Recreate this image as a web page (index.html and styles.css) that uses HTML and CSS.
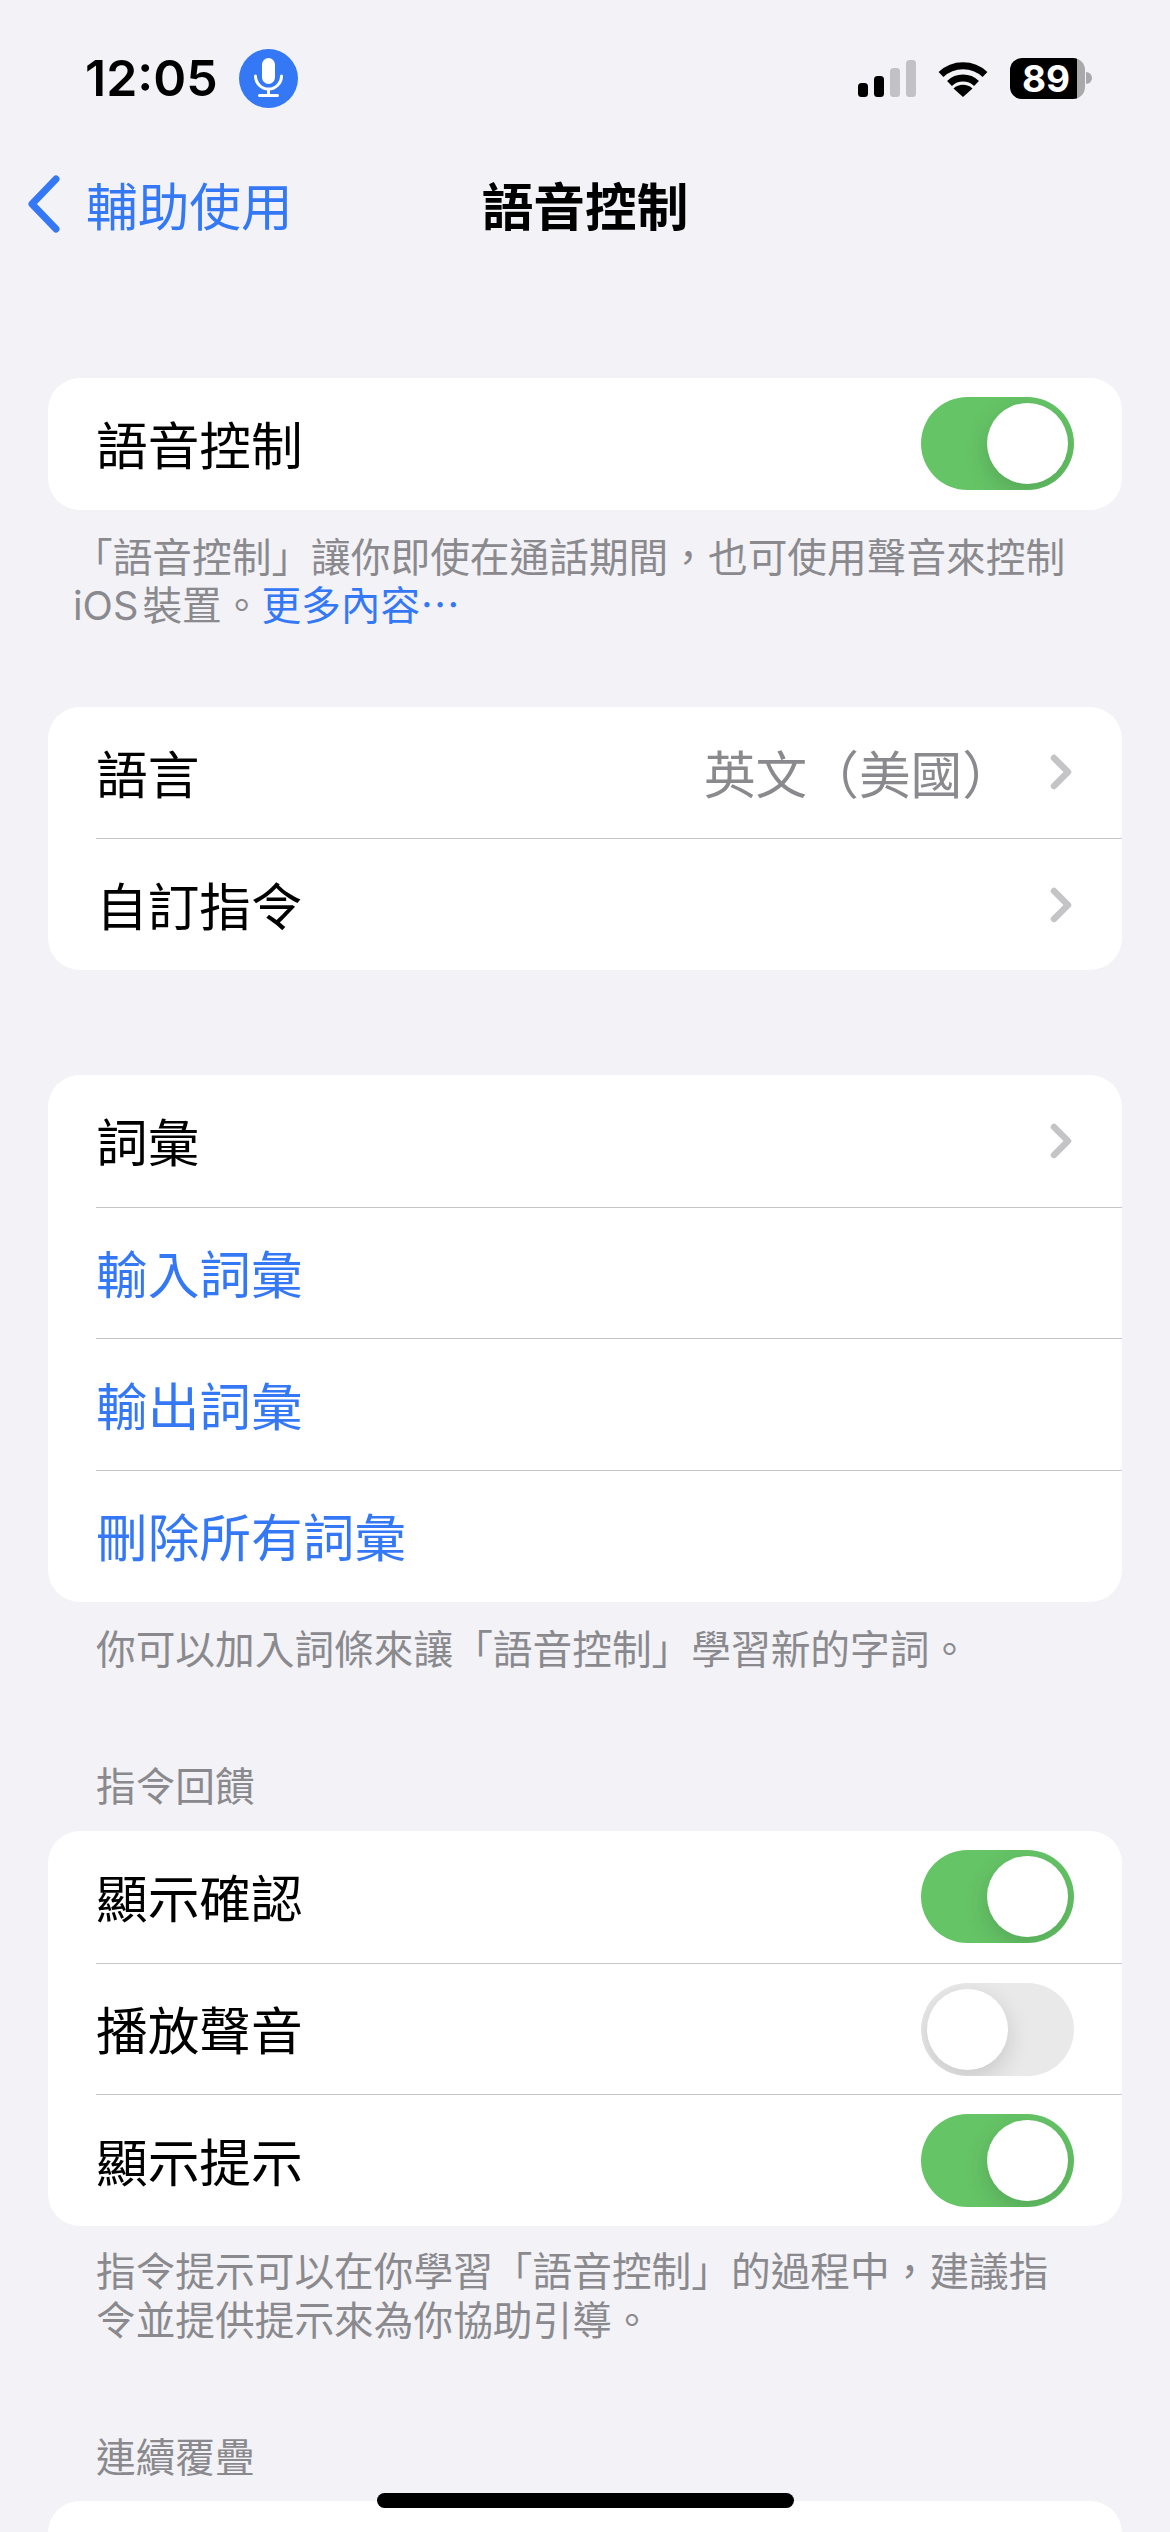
FILE: index.html
```html
<!DOCTYPE html>
<html lang="zh-Hant">
<head>
<meta charset="utf-8">
<title>語音控制</title>
<link rel="stylesheet" href="styles.css">
</head>
<body>
<div class="screen">
  <header class="status">
    <div class="status-left">
      <span class="time">12:05</span>
      <svg class="mic" viewBox="0 0 59 59" width="59" height="59">
        <circle cx="29.5" cy="29.5" r="29.5" fill="#3478f6"/>
        <rect x="23" y="9" width="13" height="26" rx="6.5" fill="#fff"/>
        <path d="M16.5 27a13 13 0 0 0 26 0M29.5 40v6M20.5 46.5h18" fill="none" stroke="#fff" stroke-width="3" stroke-linecap="round"/>
      </svg>
    </div>
    <div class="status-right">
      <svg class="signal" viewBox="0 0 58 37" width="58" height="37">
        <rect x="0" y="23" width="10" height="14" rx="3.5" fill="#000"/>
        <rect x="16" y="16" width="10" height="21" rx="3.5" fill="#000"/>
        <rect x="32" y="8" width="10" height="29" rx="3.5" fill="#c2c2c6"/>
        <rect x="48" y="0" width="10" height="37" rx="3.5" fill="#c2c2c6"/>
      </svg>
      <svg class="wifi" viewBox="0 0 50 37" width="50" height="37">
        <path d="M3 14.5a32 32 0 0 1 44 0" fill="none" stroke="#000" stroke-width="7"/>
        <path d="M11.5 23.5a19.5 19.5 0 0 1 27 0" fill="none" stroke="#000" stroke-width="7"/>
        <path d="M25 37L15.5 28.5a14 14 0 0 1 19 0z" fill="#000"/>
      </svg>
      <div class="battery">
        <div class="battery-body"><span class="battery-num">89</span></div>
        <div class="battery-nub"></div>
      </div>
    </div>
  </header>

  <nav class="nav">
    <a class="back">
      <svg viewBox="0 0 34 60" width="34" height="60">
        <path d="M29 5L5 30l24 25" fill="none" stroke="#3478f6" stroke-width="7" stroke-linecap="round" stroke-linejoin="round"/>
      </svg>
      <span>輔助使用</span>
    </a>
    <h1 class="title">語音控制</h1>
    <span></span>
  </nav>

  <main class="content">
    <section class="card card-1">
      <div class="row"><div class="row-inner"><span class="label">語音控制</span><span class="toggle on"><i></i></span></div></div>
    </section>
    <p class="note note-wide">「語音控制」讓你即使在通話期間，也可使用聲音來控制<br><span class="ios">iOS</span>裝置。<a class="link">更多內容⋯</a></p>

    <section class="card card-2">
      <div class="row"><div class="row-inner"><span class="label">語言</span><span class="detail"><span class="value label">英文（美國）</span><svg class="chev" viewBox="0 0 22 36" width="22" height="36"><path d="M4 4l14 14L4 32" fill="none" stroke="#c4c4c6" stroke-width="6.5" stroke-linecap="round" stroke-linejoin="round"/></svg></span></div></div>
      <div class="row"><div class="row-inner sep"><span class="label">自訂指令</span><svg class="chev" viewBox="0 0 22 36" width="22" height="36"><path d="M4 4l14 14L4 32" fill="none" stroke="#c4c4c6" stroke-width="6.5" stroke-linecap="round" stroke-linejoin="round"/></svg></div></div>
    </section>

    <section class="card card-3">
      <div class="row"><div class="row-inner"><span class="label">詞彙</span><svg class="chev" viewBox="0 0 22 36" width="22" height="36"><path d="M4 4l14 14L4 32" fill="none" stroke="#c4c4c6" stroke-width="6.5" stroke-linecap="round" stroke-linejoin="round"/></svg></div></div>
      <div class="row"><div class="row-inner sep"><span class="label link">輸入詞彙</span></div></div>
      <div class="row"><div class="row-inner sep"><span class="label link">輸出詞彙</span></div></div>
      <div class="row"><div class="row-inner sep"><span class="label link">刪除所有詞彙</span></div></div>
    </section>
    <p class="note note-2">你可以加入詞條來讓「語音控制」學習新的字詞。</p>

    <h2 class="section-head head-1">指令回饋</h2>
    <section class="card">
      <div class="row"><div class="row-inner"><span class="label">顯示確認</span><span class="toggle on"><i></i></span></div></div>
      <div class="row"><div class="row-inner sep"><span class="label">播放聲音</span><span class="toggle"><i></i></span></div></div>
      <div class="row"><div class="row-inner sep"><span class="label">顯示提示</span><span class="toggle on"><i></i></span></div></div>
    </section>
    <p class="note note-3">指令提示可以在你學習「語音控制」的過程中，建議指<br>令並提供提示來為你協助引導。</p>

    <h2 class="section-head head-2">連續覆疊</h2>
    <section class="card">
      <div class="row"><div class="row-inner"></div></div>
    </section>
  </main>

  <div class="home-indicator"></div>
</div>
</body>
</html>
```

FILE: styles.css
```css
* { box-sizing: border-box; }
html, body { margin: 0; padding: 0; }
body {
  background: #f2f2f7;
  color: #000;
  font-family: "Noto Sans CJK TC", "Noto Sans CJK JP", sans-serif;
}
.screen {
  position: relative;
  width: 1170px;
  height: 2532px;
  overflow: hidden;
  background: #f2f2f7;
}

/* status bar */
.status {
  height: 156px;
  display: flex;
  justify-content: space-between;
  align-items: center;
  padding: 0 78px 0 85px;
}
.status-left { display: flex; align-items: center; gap: 21px; }
.time {
  font-family: Inter, "Liberation Sans", sans-serif;
  font-size: 50px;
  font-weight: 600;
  line-height: 1;
}
.mic { display: block; }
.status-right { display: flex; align-items: center; gap: 22px; }
.signal, .wifi { display: block; }
.battery { display: flex; align-items: center; gap: 1px; }
.battery-body {
  position: relative;
  width: 75px;
  height: 41px;
  border-radius: 12px;
  background: linear-gradient(to right, #000 0, #000 67px, #a9a9ab 67px);
  display: flex;
  align-items: center;
  justify-content: flex-start;
  padding-left: 12px;
}
.battery-num {
  color: #fff;
  font-family: Inter, "Liberation Sans", sans-serif;
  font-size: 37px;
  font-weight: 700;
  line-height: 1;
}
.battery-nub {
  width: 6px;
  height: 12px;
  background: #a9a9ab;
  border-radius: 0 6px 6px 0;
}

/* navigation */
.nav {
  height: 96px;
  display: grid;
  grid-template-columns: 1fr auto 1fr;
  align-items: center;
  padding: 0 27px;
}
.back {
  display: flex;
  align-items: center;
  gap: 25px;
  color: #3478f6;
  font-size: 51.7px;
  line-height: 1;
}
.back svg { display: block; }
.title {
  margin: 0;
  font-size: 51.7px;
  font-weight: 700;
  line-height: 1;
}

/* content */
.content { padding: 126px 48px 0; }
.card {
  background: #fff;
  border-radius: 32px;
  overflow: hidden;
}
.row {
  height: 131.67px;
  padding-left: 48px;
  font-size: 51.7px;
  line-height: 1;
}
.row-inner {
  height: 100%;
  display: flex;
  align-items: center;
  justify-content: space-between;
  padding-right: 48px;
}
.row-inner.sep { border-top: 1px solid #c6c6c8; }
.label { margin-bottom: 2px; }
.detail { display: flex; align-items: center; gap: 36px; }
.value { color: #8a8a8e; }
.chev { display: block; margin-right: 2px; }
.link { color: #3478f6; }

.toggle {
  position: relative;
  display: block;
  width: 153px;
  height: 93px;
  border-radius: 47px;
  background: #e9e9ea;
  overflow: hidden;
}
.toggle i {
  position: absolute;
  top: 6px;
  left: 6px;
  width: 81px;
  height: 81px;
  border-radius: 50%;
  background: #fff;
  box-shadow: 0 8px 24px rgba(0, 0, 0, .15);
}
.toggle.on { background: #65c466; }
.toggle.on i { left: 66px; }

.note {
  margin: 0;
  padding: 0 0 0 48px;
  color: #8a8a8e;
  font-size: 39.7px;
  line-height: 48.5px;
  white-space: nowrap;
}
.note-wide { padding-left: 25px; margin-top: 21px; margin-bottom: 76px; }
.ios { font-family: Inter, "Liberation Sans", sans-serif; margin-right: 4px; }
.card-2 { margin-bottom: 105px; }
.note-2 { margin-top: 21px; }
.note-3 { margin-top: 19px; }
.section-head {
  margin: 0;
  padding-left: 48px;
  color: #8a8a8e;
  font-size: 39.7px;
  font-weight: 400;
  line-height: 48px;
}
.head-1 { margin-top: 89px; margin-bottom: 23px; }
.head-2 { margin-top: 89px; margin-bottom: 22px; }

.home-indicator {
  position: absolute;
  left: 377px;
  bottom: 24px;
  width: 417px;
  height: 15px;
  border-radius: 8px;
  background: #000;
}
```
